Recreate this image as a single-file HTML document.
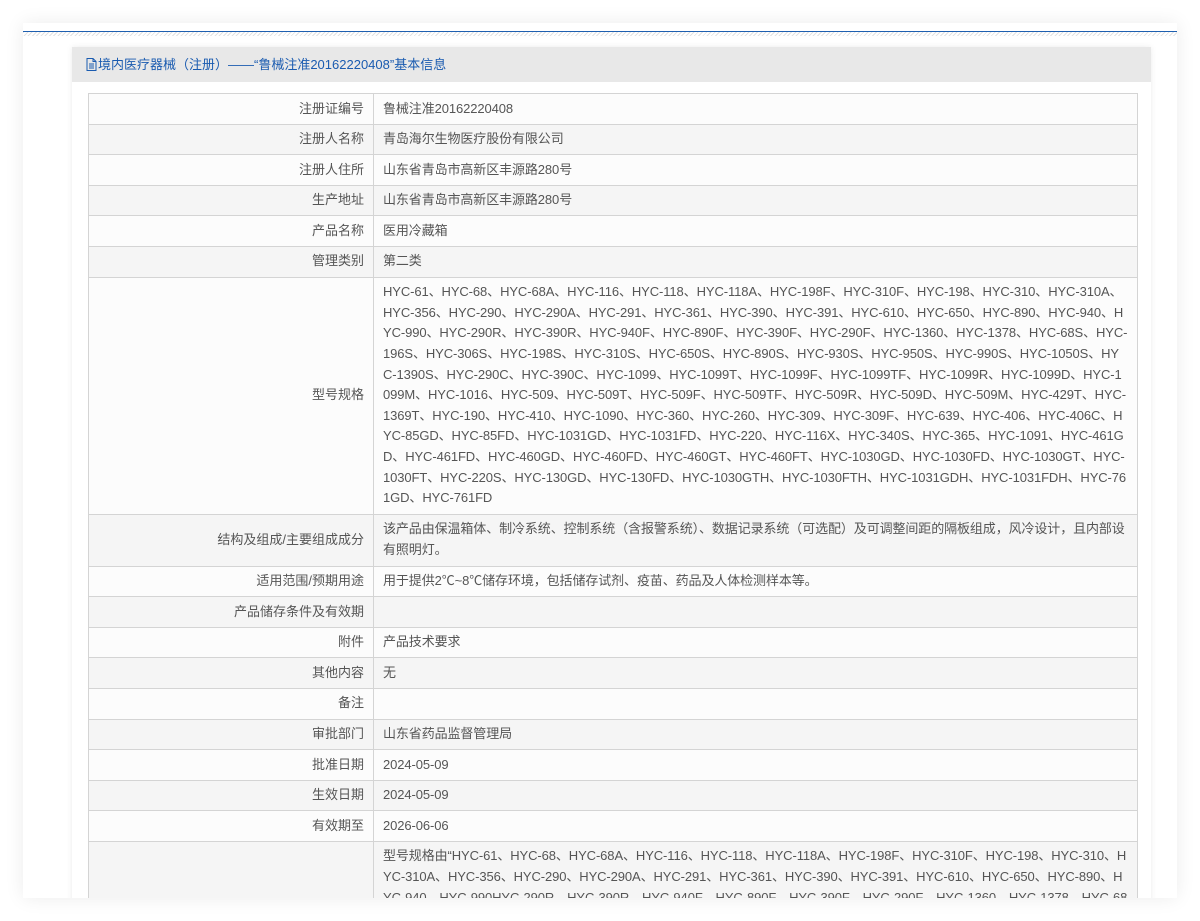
<!DOCTYPE html>
<html><head><meta charset="utf-8"><style>
*{margin:0;padding:0;box-sizing:border-box}
html,body{width:1200px;height:921px;overflow:hidden;background:#fff;font-family:"Liberation Sans","Noto Sans CJK SC",sans-serif;font-size:13px;color:#555}
.card{position:absolute;left:23px;top:23px;width:1154px;height:875px;background:#fff;box-shadow:0 0 18px rgba(0,0,0,.08);overflow:hidden}
.blue{position:absolute;left:0;top:8px;width:100%;height:1px;background:#1e5fb0}
.hatch{position:absolute;left:0;top:9px;width:100%;height:4px;background:repeating-linear-gradient(135deg,#e2e2e2 0 1px,#fff 1px 3px)}
.panel{position:absolute;left:49px;top:24px;width:1079px;height:900px;background:#fff;box-shadow:0 0 6px rgba(0,0,0,.08)}
.hd{height:35px;background:#e8e8e8;color:#1a5bb0;font-size:13px;line-height:35px;padding-left:14px}
.hd svg{vertical-align:-2px;margin-right:1px}
table{position:absolute;left:16px;top:46px;width:1050px;border-collapse:collapse;table-layout:fixed}
td{border:1px solid #d4d4d4;line-height:20.6px;padding:4.5px 9px;vertical-align:middle}
td.l{width:285px;text-align:right}
td.v{word-break:break-all;letter-spacing:-0.1px}
tr:nth-child(odd){background:#fcfcfc}
tr:nth-child(even){background:#f5f5f5}
</style></head><body>
<div class="card"><div class="blue"></div><div class="hatch"></div>
<div class="panel">
<div class="hd"><svg width="11" height="13" viewBox="0 0 11 13"><path d="M1 .5h6l3 3v9H1z M7 .5v3h3 M3 6h5M3 8h5M3 10h5" fill="none" stroke="#1a5bb0" stroke-width="1"/></svg>境内医疗器械（注册）——“鲁械注准20162220408”基本信息</div>
<table>
<tr><td class="l">注册证编号</td><td class="v">鲁械注准20162220408</td></tr>
<tr><td class="l">注册人名称</td><td class="v">青岛海尔生物医疗股份有限公司</td></tr>
<tr><td class="l">注册人住所</td><td class="v">山东省青岛市高新区丰源路280号</td></tr>
<tr><td class="l">生产地址</td><td class="v">山东省青岛市高新区丰源路280号</td></tr>
<tr><td class="l">产品名称</td><td class="v">医用冷藏箱</td></tr>
<tr><td class="l">管理类别</td><td class="v">第二类</td></tr>
<tr style="height:237px"><td class="l">型号规格</td><td class="v">HYC-61、HYC-68、HYC-68A、HYC-116、HYC-118、HYC-118A、HYC-198F、HYC-310F、HYC-198、HYC-310、HYC-310A、HYC-356、HYC-290、HYC-290A、HYC-291、HYC-361、HYC-390、HYC-391、HYC-610、HYC-650、HYC-890、HYC-940、HYC-990、HYC-290R、HYC-390R、HYC-940F、HYC-890F、HYC-390F、HYC-290F、HYC-1360、HYC-1378、HYC-68S、HYC-196S、HYC-306S、HYC-198S、HYC-310S、HYC-650S、HYC-890S、HYC-930S、HYC-950S、HYC-990S、HYC-1050S、HYC-1390S、HYC-290C、HYC-390C、HYC-1099、HYC-1099T、HYC-1099F、HYC-1099TF、HYC-1099R、HYC-1099D、HYC-1099M、HYC-1016、HYC-509、HYC-509T、HYC-509F、HYC-509TF、HYC-509R、HYC-509D、HYC-509M、HYC-429T、HYC-1369T、HYC-190、HYC-410、HYC-1090、HYC-360、HYC-260、HYC-309、HYC-309F、HYC-639、HYC-406、HYC-406C、HYC-85GD、HYC-85FD、HYC-1031GD、HYC-1031FD、HYC-220、HYC-116X、HYC-340S、HYC-365、HYC-1091、HYC-461GD、HYC-461FD、HYC-460GD、HYC-460FD、HYC-460GT、HYC-460FT、HYC-1030GD、HYC-1030FD、HYC-1030GT、HYC-1030FT、HYC-220S、HYC-130GD、HYC-130FD、HYC-1030GTH、HYC-1030FTH、HYC-1031GDH、HYC-1031FDH、HYC-761GD、HYC-761FD</td></tr>
<tr style="height:52px"><td class="l">结构及组成/主要组成成分</td><td class="v">该产品由保温箱体、制冷系统、控制系统（含报警系统）、数据记录系统（可选配）及可调整间距的隔板组成，风冷设计，且内部设有照明灯。</td></tr>
<tr><td class="l">适用范围/预期用途</td><td class="v">用于提供2℃~8℃储存环境，包括储存试剂、疫苗、药品及人体检测样本等。</td></tr>
<tr><td class="l">产品储存条件及有效期</td><td class="v">&nbsp;</td></tr>
<tr><td class="l">附件</td><td class="v">产品技术要求</td></tr>
<tr><td class="l">其他内容</td><td class="v">无</td></tr>
<tr><td class="l">备注</td><td class="v">&nbsp;</td></tr>
<tr><td class="l">审批部门</td><td class="v">山东省药品监督管理局</td></tr>
<tr><td class="l">批准日期</td><td class="v">2024-05-09</td></tr>
<tr><td class="l">生效日期</td><td class="v">2024-05-09</td></tr>
<tr><td class="l">有效期至</td><td class="v">2026-06-06</td></tr>
<tr><td class="l">&nbsp;</td><td class="v" style="vertical-align:top">型号规格由“HYC-61、HYC-68、HYC-68A、HYC-116、HYC-118、HYC-118A、HYC-198F、HYC-310F、HYC-198、HYC-310、HYC-310A、HYC-356、HYC-290、HYC-290A、HYC-291、HYC-361、HYC-390、HYC-391、HYC-610、HYC-650、HYC-890、HYC-940、HYC-990HYC-290R、HYC-390R、HYC-940F、HYC-890F、HYC-390F、HYC-290F、HYC-1360、HYC-1378、HYC-68S、HYC-196S、HYC-306S、HYC-198S、HYC-310S、HYC-650S、HYC-890S、HYC-930S、HYC-950S、HYC-990S、HYC-1050S、HYC-1390S、HYC-290C、HYC-390C、HYC-1099、HYC-1099T、HYC-1099F</td></tr>
</table>
</div></div>
</body></html>
